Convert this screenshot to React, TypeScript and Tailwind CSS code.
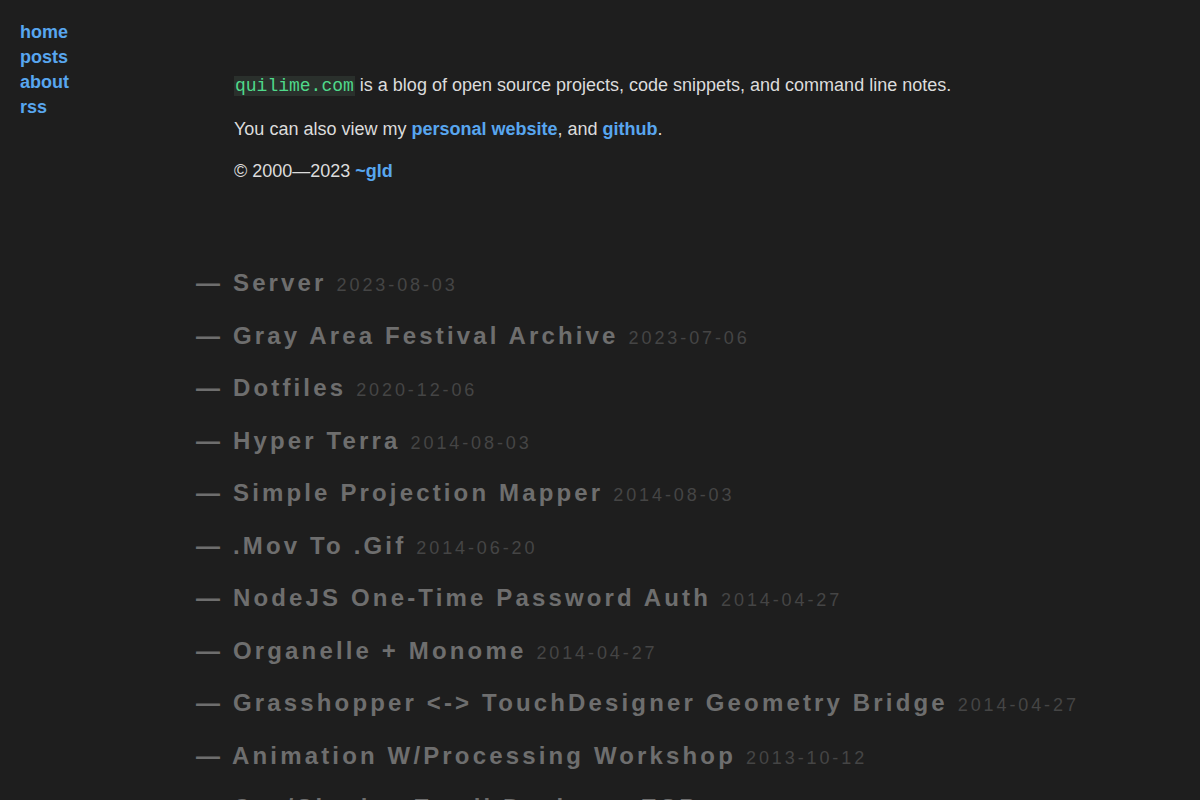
const posts = [
  { title: "Server", date: "2023-08-03" },
  { title: "Gray Area Festival Archive", date: "2023-07-06" },
  { title: "Dotfiles", date: "2020-12-06" },
  { title: "Hyper Terra", date: "2014-08-03" },
  { title: "Simple Projection Mapper", date: "2014-08-03" },
  { title: ".Mov To .Gif", date: "2014-06-20" },
  { title: "NodeJS One-Time Password Auth", date: "2014-04-27" },
  { title: "Organelle + Monome", date: "2014-04-27" },
  { title: "Grasshopper <-> TouchDesigner Geometry Bridge", date: "2014-04-27" },
  { title: "Animation W/Processing Workshop", date: "2013-10-12" },
  { title: "Css/Singles Email Designer ESP", date: "2013-09-18" },
];

export default function App() {
  return (
    <div className="min-h-screen bg-[#1e1e1e] font-['Liberation_Sans',Arial,sans-serif] flex">
      {/* Nav */}
      <nav className="w-[196px] shrink-0 pl-5 pt-5 flex flex-col text-[18px] leading-[25px] font-bold text-[#58a6ef]">
        <a href="#">home</a>
        <a href="#">posts</a>
        <a href="#">about</a>
        <a href="#">rss</a>
      </nav>

      <main className="flex-1">
        {/* Intro */}
        <div className="pl-[38px] pt-[72px] text-[18px] leading-[27px] text-[#dcdcdc] flex flex-col gap-[15.5px]">
          <p>
            <code className="font-['Liberation_Mono',monospace] text-[#4fd98a] bg-[#2a302c] px-px">quilime.com</code>{" "}
            is a blog of open source projects, code snippets, and command line notes.
          </p>
          <p>
            You can also view my <a href="#" className="font-bold text-[#58a6ef]">personal website</a>, and{" "}
            <a href="#" className="font-bold text-[#58a6ef]">github</a>.
          </p>
          <p>
            © 2000—2023 <a href="#" className="font-bold text-[#58a6ef]">~gld</a>
          </p>
        </div>

        {/* Posts */}
        <ul className="mt-[80px] flex flex-col gap-[16.5px]">
          {posts.map((p) => (
            <li key={p.title} className="flex items-baseline whitespace-nowrap">
              <a href="#" className="text-[24px] leading-[36px] font-bold tracking-[3.15px] text-[#6e6e6e]">
                — {p.title}
              </a>
              <span className="ml-[10px] text-[18px] leading-[27px] tracking-[2.9px] text-[#454545]">{p.date}</span>
            </li>
          ))}
        </ul>
      </main>
    </div>
  );
}
